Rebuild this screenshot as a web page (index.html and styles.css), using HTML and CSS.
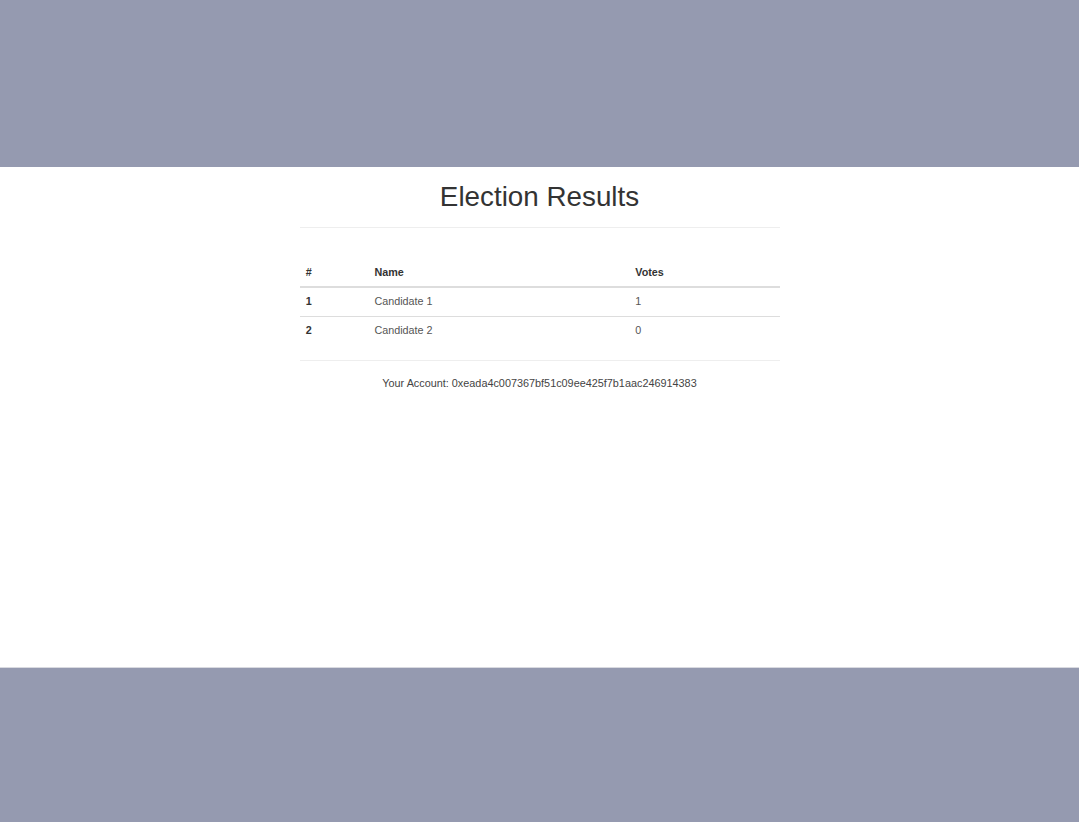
FILE: index.html
```html
<!DOCTYPE html>
<html>
<head>
<meta charset="utf-8">
<title>Election Results</title>
<link rel="stylesheet" href="styles.css">
</head>
<body>
<div class="band band-top"></div>
<main class="page">
  <div class="container">
    <h1 class="title">Election Results</h1>
    <hr class="rule">
    <table class="results">
      <thead>
        <tr><th class="c-num">#</th><th class="c-name">Name</th><th class="c-votes">Votes</th></tr>
      </thead>
      <tbody>
        <tr><th class="c-num">1</th><td>Candidate 1</td><td>1</td></tr>
        <tr><th class="c-num">2</th><td>Candidate 2</td><td>0</td></tr>
      </tbody>
    </table>
    <hr class="rule">
    <p class="account">Your Account: 0xeada4c007367bf51c09ee425f7b1aac246914383</p>
  </div>
</main>
<div class="band band-bottom"></div>
</body>
</html>
```

FILE: styles.css
```css
html, body {
  margin: 0;
  padding: 0;
  height: 822px;
  overflow: hidden;
}
body {
  background: #fff;
  font-family: "Liberation Sans", Arial, Helvetica, sans-serif;
  font-size: 10.78px;
  line-height: 15.4px;
  color: #333;
  display: flex;
  flex-direction: column;
}
.band {
  background: #959ab0;
  flex: none;
}
.band-top { height: 167px; }
.band-bottom {
  height: 154px;
  border-top: 1px solid #d9dae0;
}
.page {
  height: 500px;
  flex: none;
  background: #fff;
}
.container {
  width: 480px;
  margin: 0 auto;
}
.title {
  margin: 15px 0 0;
  font-size: 27.8px;
  line-height: 30.5px;
  font-weight: 400;
  text-align: center;
  color: #333;
}
.rule {
  margin: 14.4px 0 15.4px;
  border: 0;
  border-top: 1px solid #eee;
  height: 0;
}
.results {
  width: 100%;
  border-collapse: collapse;
  border-spacing: 0;
  margin-top: 30.5px;
  margin-bottom: 15.4px;
}
.results th, .results td {
  padding: 6.16px;
  text-align: left;
  line-height: 15.4px;
  vertical-align: top;
  border-top: 1px solid #ddd;
}
.results thead th {
  border-top: 0;
  border-bottom: 2px solid #ddd;
  font-weight: 700;
  color: #333;
}
.results td { color: #555; }
.results tbody th { font-weight: 700; color: #333; }
.c-num { width: 56.5px; }
.c-name { width: 248.5px; }
.account {
  margin: 0;
  font-size: 10.85px;
  text-align: center;
  color: #444;
}
```
